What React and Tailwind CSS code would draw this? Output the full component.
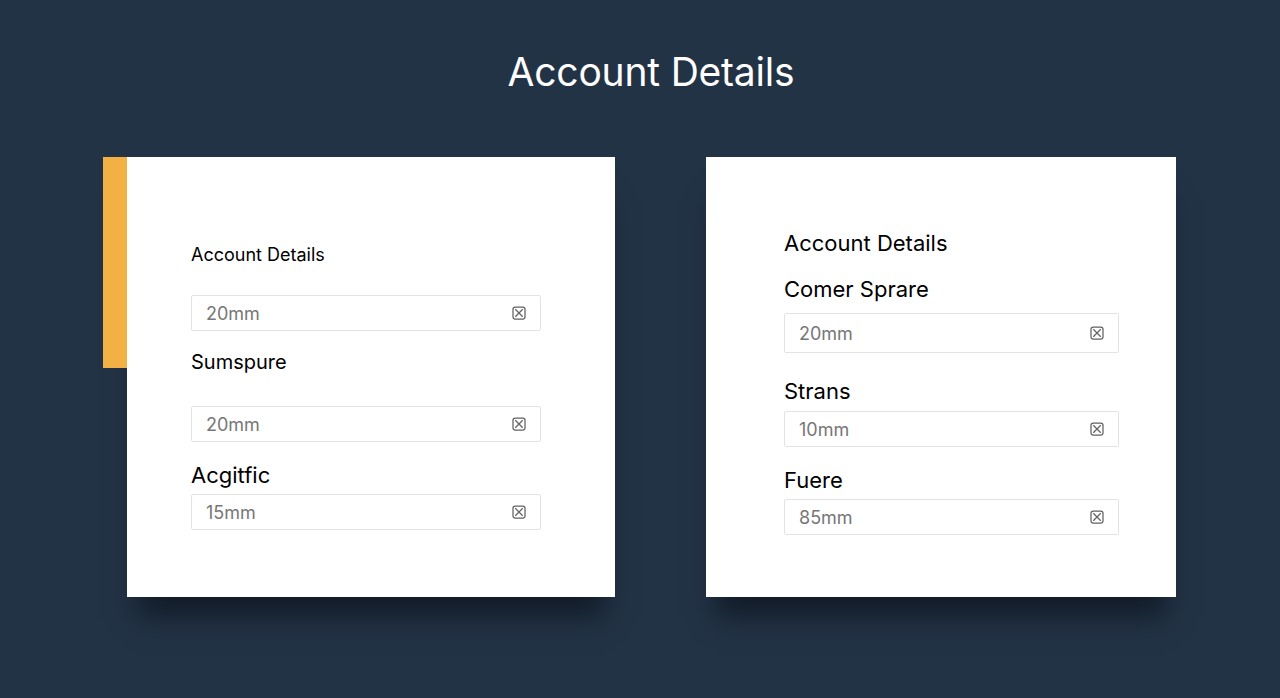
const XBox = () => (
  <svg width="14" height="14" viewBox="0 0 14 14" fill="none" stroke="#626262" strokeWidth="1.25">
    <rect x="1" y="1" width="12" height="12" rx="2.2" />
    <path d="M3.3 3.3l7.4 7.4M10.7 3.3l-7.4 7.4" />
  </svg>
);

// single input row with the clear icon
const Field = ({ value, className }) => (
  <div
    className={`flex items-center justify-between border border-[#e3e3e3] rounded-[2px] bg-white pl-[14px] pr-[14px] ${className}`}
  >
    <span className="text-[18px] text-[#777]">{value}</span>
    <XBox />
  </div>
);

export default function App() {
  return (
    <div
      className="min-h-[698px] w-full bg-[#233346] flex flex-col items-center"
      style={{ fontFamily: "Inter, 'Liberation Sans', sans-serif" }}
    >
      <h1 className="mt-[49px] ml-[22px] text-[39px] leading-[46px] text-white font-normal tracking-[-0.2px]">
        Account Details
      </h1>

      <div className="mt-[62px] flex w-full pl-[103px]">
        {/* left card with accent bar */}
        <div className="relative z-10 w-[24px] h-[211px] bg-[#f3b045] shrink-0" />
        <div className="w-[488px] h-[440px] bg-white shadow-[0_30px_26px_-10px_rgba(8,14,22,0.6)] pl-[64px] pt-[86px] flex flex-col">
          <div className="text-[18px] leading-[24px] text-black">Account Details</div>
          <Field value="20mm" className="mt-[28px] w-[350px] h-[36px]" />
          <div className="mt-[17px] text-[20px] leading-[28px] text-black">Sumspure</div>
          <Field value="20mm" className="mt-[30px] w-[350px] h-[36px]" />
          <div className="mt-[19px] text-[22px] leading-[28px] text-black">Acgitfic</div>
          <Field value="15mm" className="mt-[5px] w-[350px] h-[36px]" />
        </div>

        {/* right card */}
        <div className="ml-[91px] w-[470px] h-[440px] bg-white shadow-[0_30px_26px_-10px_rgba(8,14,22,0.6)] pl-[78px] pt-[72px] flex flex-col">
          <div className="text-[22px] leading-[28px] text-black">Account Details</div>
          <div className="mt-[18px] text-[22px] leading-[28px] text-black">Comer Sprare</div>
          <Field value="20mm" className="mt-[10px] w-[335px] h-[40px]" />
          <div className="mt-[24px] text-[22px] leading-[28px] text-black">Strans</div>
          <Field value="10mm" className="mt-[6px] w-[335px] h-[36px]" />
          <div className="mt-[19px] text-[22px] leading-[28px] text-black">Fuere</div>
          <Field value="85mm" className="mt-[5px] w-[335px] h-[36px]" />
        </div>
      </div>
    </div>
  );
}
